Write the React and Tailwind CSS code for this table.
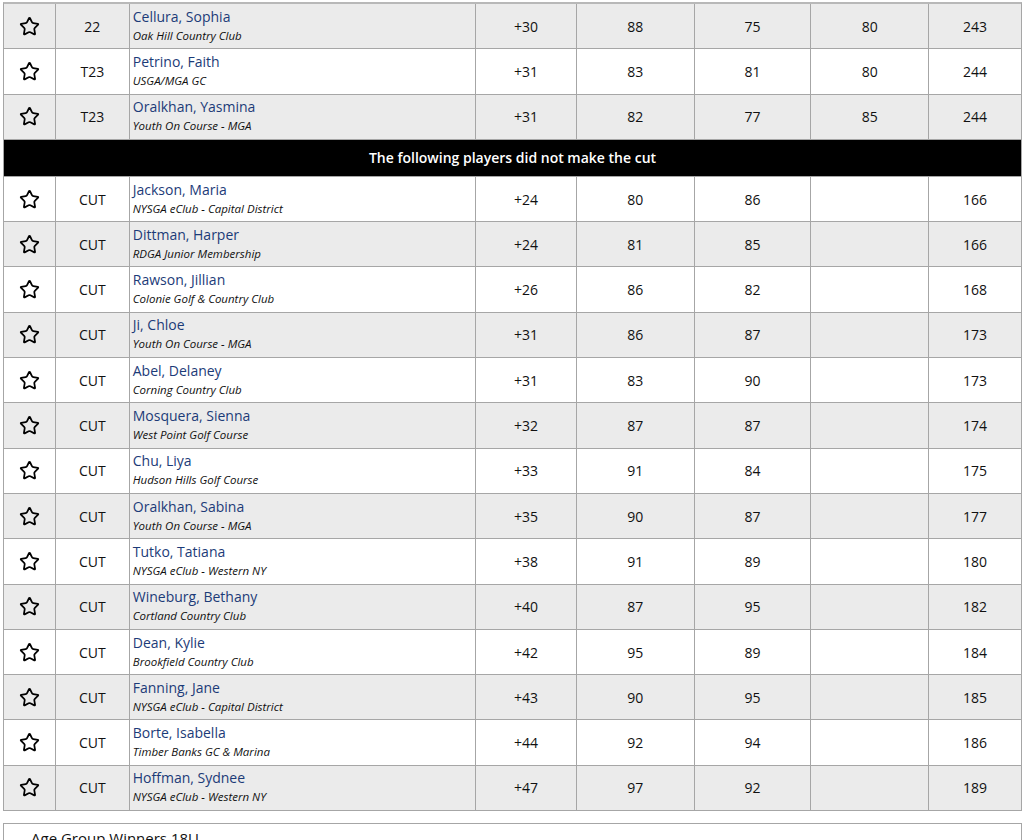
import { Star } from "lucide-react";

const made = [
  { pos: "22", name: "Cellura, Sophia", club: "Oak Hill Country Club", par: "+30", r1: "88", r2: "75", r3: "80", total: "243" },
  { pos: "T23", name: "Petrino, Faith", club: "USGA/MGA GC", par: "+31", r1: "83", r2: "81", r3: "80", total: "244" },
  { pos: "T23", name: "Oralkhan, Yasmina", club: "Youth On Course - MGA", par: "+31", r1: "82", r2: "77", r3: "85", total: "244" },
];

const cut = [
  { name: "Jackson, Maria", club: "NYSGA eClub - Capital District", par: "+24", r1: "80", r2: "86", total: "166" },
  { name: "Dittman, Harper", club: "RDGA Junior Membership", par: "+24", r1: "81", r2: "85", total: "166" },
  { name: "Rawson, Jillian", club: "Colonie Golf & Country Club", par: "+26", r1: "86", r2: "82", total: "168" },
  { name: "Ji, Chloe", club: "Youth On Course - MGA", par: "+31", r1: "86", r2: "87", total: "173" },
  { name: "Abel, Delaney", club: "Corning Country Club", par: "+31", r1: "83", r2: "90", total: "173" },
  { name: "Mosquera, Sienna", club: "West Point Golf Course", par: "+32", r1: "87", r2: "87", total: "174" },
  { name: "Chu, Liya", club: "Hudson Hills Golf Course", par: "+33", r1: "91", r2: "84", total: "175" },
  { name: "Oralkhan, Sabina", club: "Youth On Course - MGA", par: "+35", r1: "90", r2: "87", total: "177" },
  { name: "Tutko, Tatiana", club: "NYSGA eClub - Western NY", par: "+38", r1: "91", r2: "89", total: "180" },
  { name: "Wineburg, Bethany", club: "Cortland Country Club", par: "+40", r1: "87", r2: "95", total: "182" },
  { name: "Dean, Kylie", club: "Brookfield Country Club", par: "+42", r1: "95", r2: "89", total: "184" },
  { name: "Fanning, Jane", club: "NYSGA eClub - Capital District", par: "+43", r1: "90", r2: "95", total: "185" },
  { name: "Borte, Isabella", club: "Timber Banks GC & Marina", par: "+44", r1: "92", r2: "94", total: "186" },
  { name: "Hoffman, Sydnee", club: "NYSGA eClub - Western NY", par: "+47", r1: "97", r2: "92", total: "189" },
];

const cell = "flex items-center justify-center border-r border-[#a6a6a6] h-full";

function Row({ p, grey }) {
  return (
    <div
      className={`flex h-[45.3px] border-b border-[#a6a6a6] text-[14px] text-[#111] ${grey ? "bg-[#ebebeb]" : "bg-white"}`}
    >
      <div className={`${cell} w-[52px]`}>
        <Star size={21} strokeWidth={2} color="#000" />
      </div>
      <div className={`${cell} w-[74px]`}>{p.pos}</div>
      <div className="flex flex-col justify-center border-r border-[#a6a6a6] h-full w-[347px] pl-[3px] pb-[1px]">
        <span className="text-[14px] leading-[20px] text-[#1c3b78]">{p.name}</span>
        <span className="text-[11.5px] leading-[18px] italic text-[#111]">{p.club}</span>
      </div>
      <div className={`${cell} w-[101px]`}>{p.par}</div>
      <div className={`${cell} w-[118px]`}>{p.r1}</div>
      <div className={`${cell} w-[117px]`}>{p.r2}</div>
      <div className={`${cell} w-[118px]`}>{p.r3}</div>
      <div className="flex items-center justify-center h-full w-[92px]">{p.total}</div>
    </div>
  );
}

export default function App() {
  return (
    <div className="w-[1024px] h-[840px] overflow-hidden bg-white pt-[2px] pl-[3px] pr-[2px]" style={{ fontFamily: "'Open Sans', Lato, sans-serif" }}>
      <div className="border border-[#a6a6a6] border-b-0 border-t-2 border-t-[#b8b8b8]">
        {made.map((p, i) => (
          <Row key={p.name} p={p} grey={i % 2 === 0} />
        ))}
        <div className="flex items-center justify-center h-[37px] bg-black text-white text-[14px] font-semibold border-b border-[#a6a6a6]">
          The following players did not make the cut
        </div>
        {cut.map((p, i) => (
          <Row key={p.name} p={{ ...p, pos: "CUT", r3: "" }} grey={i % 2 === 1} />
        ))}
      </div>
      <div className="mt-[12px] border border-[#a6a6a6] h-[40px] pl-[27px] pt-[4px] text-[15px] leading-[20px] text-[#111]">
        Age Group Winners 18U
      </div>
    </div>
  );
}
